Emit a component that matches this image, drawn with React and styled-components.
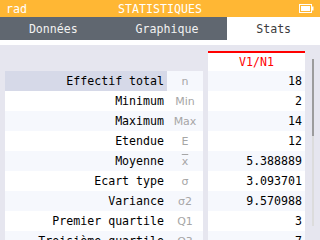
import React from "react";
import styled, { createGlobalStyle } from "styled-components";

const Global = createGlobalStyle`
  html, body { margin: 0; padding: 0; background: #e6e6ef; }
  body { width: 320px; height: 240px; overflow: hidden; }
`;

const mono = `"DejaVu Sans Mono", "Liberation Mono", monospace`;

const Screen = styled.div`
  width: 320px;
  height: 240px;
  display: flex;
  flex-direction: column;
  overflow: hidden;
  position: relative;
  font-family: ${mono};
  font-size: 11.6px;
`;

const TitleBar = styled.div`
  height: 17px;
  flex: none;
  background: #ffb734;
  color: #fff;
  display: grid;
  grid-template-columns: 1fr auto 1fr;
  align-items: center;
  padding: 0 6px;
`;

const TitleLeft = styled.span`
  justify-self: start;
`;

const TitleRight = styled.span`
  justify-self: end;
  display: flex;
  align-items: center;
`;

const TabBar = styled.div`
  height: 23px;
  flex: none;
  display: flex;
  background: #606770;
`;

const Tab = styled.div`
  flex: 1 1 auto;
  display: flex;
  align-items: center;
  justify-content: center;
  background: ${(p) => (p.$active ? "#ffffff" : "transparent")};
  color: ${(p) => (p.$active ? "#3c3c3c" : "#f2f2f2")};
`;

const Content = styled.div`
  flex: 1;
  background: #e6e6ef;
  border-top: 5px solid #ffffff;
  padding: 6px 0 0 5px;
`;

const Table = styled.div`
  display: grid;
  grid-template-columns: 162px 36px 102px;
  grid-auto-rows: 20px;
`;

const Spacer = styled.div`
  grid-column: span 2;
`;

const HeaderCell = styled.div`
  margin-left: 5px;
  background: #fff;
  border-top: 2px solid #ff0000;
  color: #ff0000;
  display: flex;
  align-items: center;
  justify-content: center;
`;

const rowBg = (p) => (p.$selected ? "#d6d9e8" : p.$odd ? "#f6f8fd" : "#ffffff");

const LabelCell = styled.div`
  background: ${rowBg};
  color: #000;
  display: flex;
  align-items: center;
  justify-content: flex-end;
  padding-right: 3px;
  white-space: nowrap;
`;

const SymbolCell = styled.div`
  background: ${(p) => (p.$odd ? "#f6f8fd" : "#ffffff")};
  color: #a6a6a6;
  font-family: "DejaVu Sans", sans-serif;
  font-size: 11px;
  display: flex;
  align-items: center;
  justify-content: center;
`;

const ValueCell = styled.div`
  margin-left: 5px;
  background: ${(p) => (p.$odd ? "#f6f8fd" : "#ffffff")};
  color: #000;
  display: flex;
  align-items: center;
  justify-content: flex-end;
  padding-right: 3px;
`;

const Overline = styled.span`
  text-decoration: overline;
`;

const ScrollTrack = styled.div`
  position: absolute;
  left: 312px;
  top: 59px;
  width: 2px;
  height: 167px;
  background: #dcdcdc;
`;

const ScrollThumb = styled.div`
  width: 100%;
  height: 77px;
  background: #9c9c9c;
`;

const Battery = () => (
  <svg width="15" height="9" viewBox="0 0 15 9">
    <rect x="0.5" y="0.5" width="12" height="8" fill="none" stroke="#fff" strokeWidth="1" />
    <rect x="2" y="2" width="9" height="5" fill="#fff" />
    <rect x="13" y="2.5" width="1.5" height="4" fill="#fff" />
  </svg>
);

const rows = [
  ["Effectif total", "n", "18"],
  ["Minimum", "Min", "2"],
  ["Maximum", "Max", "14"],
  ["Etendue", "E", "12"],
  ["Moyenne", <Overline>x</Overline>, "5.388889"],
  ["Ecart type", "σ", "3.093701"],
  ["Variance", "σ2", "9.570988"],
  ["Premier quartile", "Q1", "3"],
  ["Troisième quartile", "Q3", "7"],
];

export default function App() {
  return (
    <>
      <Global />
      <Screen>
        <TitleBar>
          <TitleLeft>rad</TitleLeft>
          <span>STATISTIQUES</span>
          <TitleRight>
            <Battery />
          </TitleRight>
        </TitleBar>
        <TabBar>
          <Tab>Données</Tab>
          <Tab>Graphique</Tab>
          <Tab $active>Stats</Tab>
        </TabBar>
        <Content>
          <Table>
            <Spacer />
            <HeaderCell>V1/N1</HeaderCell>
            {rows.map(([label, sym, val], i) => {
              const odd = i % 2 === 0;
              return (
                <React.Fragment key={i}>
                  <LabelCell $odd={odd} $selected={i === 0}>{label}</LabelCell>
                  <SymbolCell $odd={odd}>{sym}</SymbolCell>
                  <ValueCell $odd={odd}>{val}</ValueCell>
                </React.Fragment>
              );
            })}
          </Table>
        </Content>
        <ScrollTrack>
          <ScrollThumb />
        </ScrollTrack>
      </Screen>
    </>
  );
}
